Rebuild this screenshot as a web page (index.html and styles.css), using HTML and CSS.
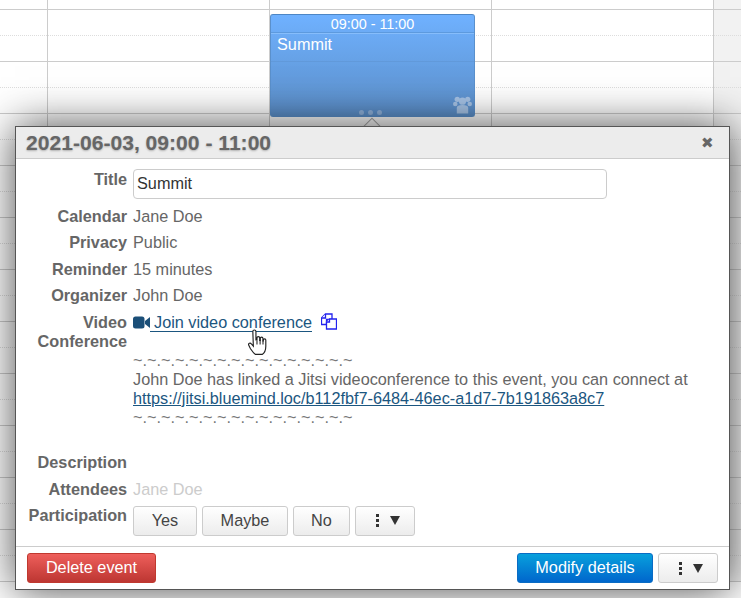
FILE: index.html
```html
<!doctype html>
<html>
  <head>
    <meta charset="utf-8">
    <title>Event</title>
    <link rel="stylesheet" href="styles.css">
  </head>
  <body>
    <table class="cal">
      <tr class="first"><td></td><td></td><td></td><td></td><td class="side"></td></tr>
      <tr class="half"><td></td><td></td><td></td><td></td><td class="side"></td></tr>
      <tr class="hour"><td></td><td></td><td></td><td></td><td class="side"></td></tr>
      <tr class="half"><td></td><td></td><td></td><td></td><td class="side"></td></tr>
      <tr class="hour"><td></td><td></td><td></td><td></td><td class="side"></td></tr>
      <tr class="half"><td></td><td></td><td></td><td></td><td class="side"></td></tr>
      <tr class="hour"><td></td><td></td><td></td><td></td><td class="side"></td></tr>
      <tr class="half"><td></td><td></td><td></td><td></td><td class="side"></td></tr>
      <tr class="hour"><td></td><td></td><td></td><td></td><td class="side"></td></tr>
      <tr class="half"><td></td><td></td><td></td><td></td><td class="side"></td></tr>
      <tr class="hour"><td></td><td></td><td></td><td></td><td class="side"></td></tr>
      <tr class="half"><td></td><td></td><td></td><td></td><td class="side"></td></tr>
      <tr class="hour"><td></td><td></td><td></td><td></td><td class="side"></td></tr>
      <tr class="half"><td></td><td></td><td></td><td></td><td class="side"></td></tr>
      <tr class="hour"><td></td><td></td><td></td><td></td><td class="side"></td></tr>
      <tr class="half"><td></td><td></td><td></td><td></td><td class="side"></td></tr>
      <tr class="hour"><td></td><td></td><td></td><td></td><td class="side"></td></tr>
      <tr class="half"><td></td><td></td><td></td><td></td><td class="side"></td></tr>
      <tr class="hour"><td></td><td></td><td></td><td></td><td class="side"></td></tr>
      <tr class="half"><td></td><td></td><td></td><td></td><td class="side"></td></tr>
      <tr class="hour"><td></td><td></td><td></td><td></td><td class="side"></td></tr>
      <tr class="half"><td></td><td></td><td></td><td></td><td class="side"></td></tr>
      <tr class="hour"><td></td><td></td><td></td><td></td><td class="side"></td></tr>
    </table>

    <div class="event">
      <div class="event-time">09:00 - 11:00</div>
      <div class="event-title">Summit</div>
      <svg class="event-people" width="19" height="18" viewBox="0 0 20 18">
        <circle cx="4.500" cy="3" r="2.800"/><circle cx="15.500" cy="3" r="2.800"/><circle cx="10" cy="5" r="3.800"/>
        <circle cx="2.400" cy="8" r="2.400"/><circle cx="17.600" cy="8" r="2.400"/>
        <path d="M4 18v-6c0-2 2-3 6-3s6 1 6 3v6z"/>
      </svg>
      <div class="event-dots"><i></i><i></i><i></i></div>
    </div>

    <div class="arrow"></div>

    <div class="popup">
      <div class="popup-head">
        <h1>2021-06-03, 09:00 - 11:00</h1>
        <span class="close">&#10006;</span>
      </div>
      <div class="popup-body">
        <div class="label title-label">Title</div>
        <div class="value"><input class="title-input" type="text" value="Summit"></div>

        <div class="label">Calendar</div>
        <div class="value">Jane Doe</div>

        <div class="label">Privacy</div>
        <div class="value">Public</div>

        <div class="label">Reminder</div>
        <div class="value">15 minutes</div>

        <div class="label">Organizer</div>
        <div class="value">John Doe</div>

        <div class="label video-label">Video Conference</div>
        <div class="value video">
          <div class="join-row">
            <svg class="cam" width="17" height="13" viewBox="0 0 17 13"><rect x="0" y="0.5" width="11.5" height="12" rx="2.5"/><path d="M12 5l5-4v11l-5-4z"/></svg><a class="join" href="#">&nbsp;Join video conference</a>
            <svg class="copy" width="16" height="17" viewBox="0 0 16 16" fill="#fff" stroke="#2222ee" stroke-width="1.300">
              <path d="M4.500.5H11V6H5.500v5H.5V4.500z"/>
              <path d="M4.500.5v4h-4"/>
              <path d="M8.500 5.500h7v10h-10V8.500z"/>
              <path d="M8.500 5.500v3h-3"/>
            </svg>
          </div>
        </div>

        <div class="label empty"></div>
        <div class="value notes">
          <div class="tilde">~.~.~.~.~.~.~.~.~.~.~.~.~.~.~.~</div>
          <div>John Doe has linked a Jitsi videoconference to this event, you can connect at</div>
          <a href="#">https://jitsi.bluemind.loc/b112fbf7-6484-46ec-a1d7-7b191863a8c7</a>
          <div class="tilde">~.~.~.~.~.~.~.~.~.~.~.~.~.~.~.~</div>
        </div>

        <div class="label desc">Description</div>
        <div class="value desc"></div>

        <div class="label">Attendees</div>
        <div class="value muted">Jane Doe</div>

        <div class="label part">Participation</div>
        <div class="value part-buttons">
          <button class="btn yes">Yes</button>
          <button class="btn maybe">Maybe</button>
          <button class="btn no">No</button>
          <button class="btn more"><span class="vdots"><i></i><i></i><i></i></span><span class="caret"></span></button>
        </div>
      </div>
      <div class="popup-foot">
        <button class="btn-danger">Delete event</button>
        <span class="foot-right">
          <button class="btn-primary">Modify details</button>
          <button class="btn more"><span class="vdots"><i></i><i></i><i></i></span><span class="caret"></span></button>
        </span>
      </div>
    </div>

    <svg class="hand" width="19" height="27" viewBox="0 0 18 26">
      <path d="M4.500 2.500c0-2 3-2 3 0v8l1 0v-2c0-1.600 2.600-1.600 2.600 0v2.500h.6v-2c0-1.500 2.500-1.500 2.500 0v2.500h.4v-1c0-1.400 2.400-1.400 2.400 0v6c0 4-2 7-3.500 8H7c-2-1-3-3-5-6l-1.500-3c-.6-1.700 1.500-2.600 2.600-1.200l1.900 2.200z" fill="#fff" stroke="#222" stroke-width="1.100"/>
      <path d="M8.500 11v4M11.500 11v4M14.300 11v4" stroke="#222" fill="none"/>
    </svg>
  </body>
</html>
```
FILE: styles.css
```css
html, body {
  margin: 0;
  height: 598px;
  overflow: hidden;
  background-color: #fff;
}
body {
  font-family: "Liberation Sans", Arial, sans-serif;
  font-size: 16.25px;
  color: #666;
}

/* calendar behind the popup */
.cal {
  border-collapse: collapse;
  table-layout: fixed;
  width: 741px;
}
.cal td {
  width: 221px;
  height: 25px;
  padding: 0;
  border-left: 1px solid #ccc;
}
.cal td:first-child {
  width: 47px;
  border-left: 0;
}
.cal td.side {
  width: 27px;
  background-color: #f2f2f2;
}
.cal .first td {
  height: 9px;
  border-bottom: 1px solid #ccc;
}
.cal .half td {
  border-bottom: 1px dotted #ddd;
}
.cal .hour td {
  border-bottom: 1px solid #ccc;
}

.event {
  position: absolute;
  left: 270px;
  top: 14px;
  width: 203px;
  height: 101px;
  border: 1px solid #5a90cc;
  border-top-color: #4d86c4;
  border-radius: 3px;
  background:
    linear-gradient(transparent 46px, rgba(0, 0, 0, 0.05) 46px, rgba(0, 0, 0, 0.05) 47px, transparent 47px),
    linear-gradient(#6fb1ff, #5c8fc9);
  color: #fff;
}
.event-time {
  height: 17px;
  line-height: 18px;
  font-size: 14.400px;
  text-align: center;
  border-bottom: 1px solid #5d9ade;
  box-shadow: 0 1px 0 #86bdfb;
}
.event-title {
  padding: 1px 6px;
  line-height: 20px;
}
.event-people {
  position: absolute;
  right: 2px;
  bottom: 2px;
  fill: #a6c3e6;
}
.event-dots {
  position: absolute;
  left: 0;
  right: 5px;
  bottom: 1px;
  display: flex;
  justify-content: center;
  gap: 4px;
}
.event-dots i {
  width: 5px;
  height: 5px;
  border-radius: 50%;
  background-color: #8fb2dc;
}
.arrow {
  position: absolute;
  left: 366px;
  top: 120px;
  width: 10px;
  height: 10px;
  background-color: #fff;
  border: 1px solid #aaa;
  transform: rotate(45deg);
}

/* popup */
.popup {
  position: absolute;
  left: 15px;
  top: 126px;
  width: 713px;
  height: 462px;
  border: 1px solid #555;
  background-color: #fff;
  box-shadow: 0 0 40px rgba(0, 0, 0, 0.7);
  display: flex;
  flex-direction: column;
}
.popup-head {
  height: 31px;
  flex: none;
  background-color: #ececec;
  border-bottom: 1px solid #ccc;
  display: flex;
  align-items: center;
  justify-content: space-between;
  padding: 0 15px 0 10px;
}
.popup-head h1 {
  margin: 0;
  font-size: 21.100px;
  font-weight: bold;
  color: #666;
  text-shadow: 0 1px 2px rgba(0, 0, 0, 0.25);
}
.close {
  font-size: 15px;
  color: #666;
}
.popup-body {
  flex: 1;
  display: grid;
  grid-template-columns: 111px 1fr;
  grid-auto-rows: min-content;
  column-gap: 6px;
  padding-top: 10px;
}
.label {
  text-align: right;
  font-weight: bold;
  color: #666;
  line-height: 20px;
  margin-bottom: 6.500px;
}
.value {
  color: #666;
  line-height: 20px;
  margin-bottom: 6.500px;
}
.title-label {
  margin-bottom: 0;
}
.title-input {
  display: block;
  width: 466px;
  height: 26px;
  margin: 0;
  padding: 0 3px 2px;
  border: 1px solid #ccc;
  border-radius: 4px;
  font: 16.25px "Liberation Sans", Arial, sans-serif;
  color: #333;
}
.video-label {
  line-height: 19px;
  margin-top: 1px;
  margin-bottom: 7.500px;
}
.video {
  margin-top: 1px;
  margin-bottom: 5.500px;
}
.join-row {
  display: flex;
  align-items: center;
  height: 20px;
}
.cam {
  fill: #1b4f78;
}
.join {
  color: #1b5680;
  text-decoration: none;
  border-bottom: 1px solid #1b5680;
  line-height: 17px;
  margin-left: -0.500px;
}
.copy {
  margin-left: 9px;
  margin-top: -3px;
}
.empty {
  margin: 0;
}
.notes {
  color: #666;
  line-height: 19px;
  margin-top: -7px;
  margin-bottom: 24.500px;
}
.notes a {
  color: #1b5680;
  display: block;
}
.tilde {
  color: #777;
}
.muted {
  color: #ccc;
}
.desc {
  margin-bottom: 7px;
}
.part {
  margin-top: -0.500px;
}
.part-buttons {
  display: flex;
  gap: 5px;
  margin-top: 0.500px;
}

.btn {
  height: 30px;
  padding: 0;
  border: 1px solid #ccc;
  border-radius: 3px;
  background: linear-gradient(#fff, #ececec);
  font: 16.25px "Liberation Sans", Arial, sans-serif;
  color: #444;
}
.yes { width: 64px; }
.maybe { width: 86px; }
.no { width: 57px; }
.more {
  width: 60px;
  display: flex;
  align-items: center;
  gap: 11px;
  padding-left: 20px;
}
.vdots {
  display: flex;
  flex-direction: column;
  gap: 2px;
}
.vdots i {
  width: 3px;
  height: 3px;
  background-color: #333;
}
.caret {
  width: 0;
  height: 0;
  border-left: 5px solid transparent;
  border-right: 5px solid transparent;
  border-top: 9px solid #333;
}

.popup-foot {
  height: 43px;
  flex: none;
  border-top: 1px solid #ccc;
  display: flex;
  justify-content: space-between;
  align-items: flex-start;
  padding: 6px 11px 0 11px;
  box-sizing: border-box;
}
.foot-right {
  display: flex;
  gap: 5px;
}
.btn-danger, .btn-primary {
  height: 30px;
  padding: 0 0 2px;
  border: 1px solid #c0392f;
  border-radius: 3px;
  font: 16.25px "Liberation Sans", Arial, sans-serif;
  color: #fff;
}
.btn-danger {
  width: 129px;
  background: linear-gradient(#ee5f5b, #bd3632);
}
.btn-primary {
  width: 136px;
  border-color: #0a6cc4;
  background: linear-gradient(#08a0dc, #0066cc);
}
.hand {
  position: absolute;
  left: 248px;
  top: 329px;
}
```
